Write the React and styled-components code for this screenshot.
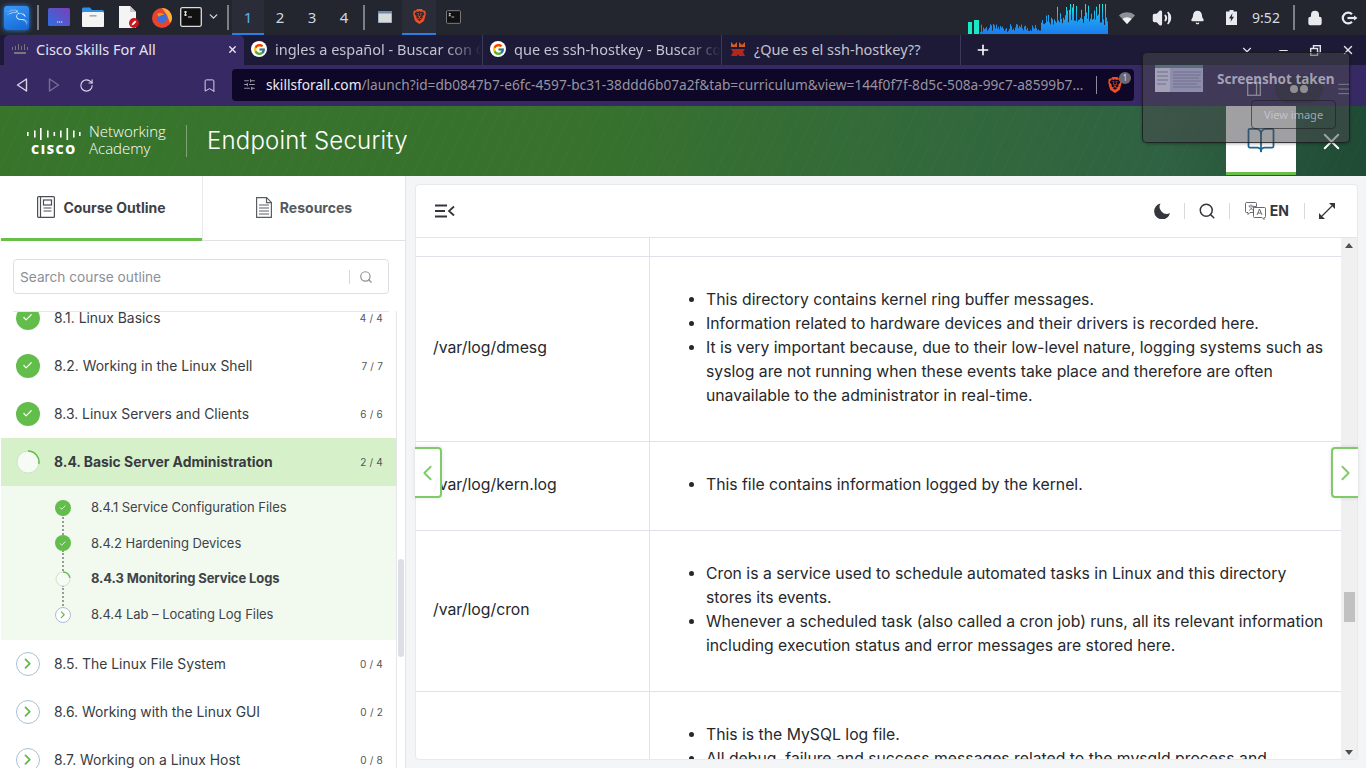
import React from "react";
import styled, { createGlobalStyle } from "styled-components";
import { SiBrave, SiKalilinux } from "react-icons/si";
import { FcGoogle } from "react-icons/fc";
import {
  Bell,
  BookOpen,
  Check,
  ChevronDown,
  ChevronLeft,
  ChevronRight,
  Lock,
  Menu,
  Plus,
  RotateCw,
  Search,
  SlidersHorizontal,
  Volume2,
  X,
  Bookmark,
  Minus,
} from "lucide-react";

const GlobalStyle = createGlobalStyle`
  html, body { margin: 0; padding: 0; height: 100%; overflow: hidden; background: #f4f5f7; }
  * { box-sizing: border-box; }
`;

const Screen = styled.div`
  position: relative;
  width: 1366px;
  height: 768px;
  overflow: hidden;
  display: flex;
  flex-direction: column;
  font-family: Inter, "Liberation Sans", sans-serif;
`;

/* ---------- desktop panel ---------- */
const Panel = styled.div`
  height: 35px;
  flex: none;
  background: #23262f;
  display: flex;
  align-items: center;
  color: #e6e8ec;
  font-family: "Noto Sans", sans-serif;
`;

const PanelSlot = styled.div`
  width: ${(p) => p.$w}px;
  height: 35px;
  flex: none;
  display: flex;
  align-items: center;
  justify-content: center;
  font-size: 15px;
  color: ${(p) => (p.$active ? "#62b0f5" : "#cfd6e2")};
  background: ${(p) => (p.$active ? "#2a2d37" : "transparent")};
  border-bottom: 2px solid ${(p) => (p.$active ? "#2a7fe0" : "transparent")};
`;

const PanelSep = styled.div`
  width: 2px;
  height: 25px;
  margin: 0 ${(p) => p.$gap}px;
  background: #7c7f86;
  flex: none;
`;

const KaliBox = styled.div`
  width: 25px;
  height: 24px;
  margin: 0 8px 0 4px;
  border-radius: 3px;
  background: linear-gradient(160deg, #3a98f6, #1467d6);
  box-shadow: 0 0 5px #2a85e8;
  color: #fff;
  display: flex;
  align-items: center;
  justify-content: center;
  font-size: 23px;
  flex: none;
`;

const NetGraph = styled.svg`
  width: 140px;
  height: 30px;
  margin-left: 498px;
  align-self: flex-end;
  margin-bottom: 1px;
  flex: none;
`;

const Tray = styled.div`
  display: flex;
  align-items: center;
  flex: none;
  color: #e8eaee;
`;

const TrayIcon = styled.div`
  width: ${(p) => p.$w}px;
  flex: none;
  display: flex;
  justify-content: center;
`;

const Clock = styled.span`
  font-size: 14px;
  color: #d8dbe0;
  width: 40px;
  text-align: center;
  flex: none;
`;

/* ---------- browser tabs ---------- */
const TabStrip = styled.div`
  height: 30px;
  flex: none;
  background: #1d1a38;
  display: flex;
  align-items: stretch;
  padding-left: 4px;
  color: #d0cfdc;
  font-family: "Noto Sans", sans-serif;
  font-size: 14.5px;
`;

const Tab = styled.div`
  width: ${(p) => p.$w}px;
  flex: none;
  display: flex;
  align-items: center;
  gap: 8px;
  padding-left: ${(p) => p.$pl}px;
  padding-bottom: 2px;
  background: ${(p) => (p.$active ? "#372963" : "transparent")};
  border-radius: ${(p) => (p.$active ? "5px 5px 0 0" : "0")};
  border-right: ${(p) => (p.$sep ? "1px solid #3c3a58" : "none")};
  margin-right: ${(p) => p.$mr || 0}px;
  color: ${(p) => (p.$active ? "#e4e2ee" : "#c3c2d0")};
`;

const TabText = styled.span`
  flex: 1;
  min-width: 0;
  white-space: nowrap;
  -webkit-mask-image: ${(p) =>
    p.$fade ? "linear-gradient(90deg, #000 82%, transparent 100%)" : "none"};
  mask-image: ${(p) =>
    p.$fade ? "linear-gradient(90deg, #000 82%, transparent 100%)" : "none"};
`;

const Favicon = styled.div`
  width: 16px;
  height: 16px;
  flex: none;
  border-radius: 50%;
  background: #fff;
  display: flex;
  align-items: center;
  justify-content: center;
  font-size: 13px;
`;

const TabClose = styled.div`
  width: 24px;
  display: flex;
  justify-content: center;
  flex: none;
  color: #e6e6ee;
`;

const TabRest = styled.div`
  flex: 1;
  display: flex;
  align-items: center;
  color: #fff;
  padding-left: 14px;
`;

const TabGap = styled.div`
  flex: 1;
`;

const WindowButton = styled.div`
  width: ${(p) => p.$w}px;
  display: flex;
  justify-content: center;
  flex: none;
  color: #e4e4ec;
`;

/* ---------- browser toolbar ---------- */
const Toolbar = styled.div`
  height: 41px;
  flex: none;
  background: #372963;
  display: flex;
  align-items: flex-start;
  padding-top: 4px;
  color: #d7d4e6;
`;

const NavButton = styled.div`
  width: ${(p) => p.$w}px;
  height: 32px;
  flex: none;
  display: flex;
  align-items: center;
  justify-content: ${(p) => (p.$end ? "flex-end" : "center")};
  padding-right: ${(p) => (p.$end ? "15px" : "0")};
  opacity: ${(p) => (p.$off ? 0.4 : 1)};
`;

const AddressBar = styled.div`
  width: 902px;
  height: 32px;
  flex: none;
  background: #0e0728;
  border-radius: 4px;
  display: flex;
  align-items: center;
  padding: 0 0 1px 11px;
  gap: 10px;
  font-family: "Noto Sans", sans-serif;
  font-size: 13.7px;
  color: #97949f;
`;

const Url = styled.div`
  flex: 1;
  min-width: 0;
  white-space: nowrap;
  b {
    font-weight: 400;
    color: #eceaf2;
  }
`;

const ShieldBox = styled.div`
  width: 38px;
  height: 18px;
  flex: none;
  border-left: 1px solid #8d8a99;
  position: relative;
  color: #f04e23;
  font-size: 16px;
  display: flex;
  align-items: center;
  padding-left: 10px;
`;

const ShieldCount = styled.span`
  position: absolute;
  left: 22px;
  top: -4px;
  width: 12px;
  height: 12px;
  border-radius: 50%;
  background: #6b6872;
  color: #ddd;
  font-size: 8px;
  line-height: 12px;
  text-align: center;
`;

const SideToggle = styled.div`
  width: 14px;
  height: 32px;
  margin: 4px 14px 0 113px;
  flex: none;
  display: flex;
  align-items: center;
`;

const WalletPill = styled.div`
  width: 48px;
  height: 28px;
  border-radius: 14px;
  background: #2a2444;
  flex: none;
  display: flex;
  align-items: center;
  justify-content: center;
  color: #ddd;
  margin-top: 6px;
`;

const MenuButton = styled.div`
  width: 42px;
  height: 32px;
  margin-top: 4px;
  flex: none;
  display: flex;
  align-items: center;
  justify-content: center;
`;

/* ---------- course header ---------- */
const CourseHeader = styled.header`
  height: 70px;
  flex: none;
  display: flex;
  align-items: stretch;
  color: #fff;
  background:
    repeating-linear-gradient(115deg, rgba(255, 255, 255, 0.02) 0 1px, transparent 1px 13px),
    linear-gradient(90deg, #38752b 0%, #37712e 45%, #32683c 70%, #2f6242 85%, #1f4a35 100%);
`;

const Brand = styled.div`
  width: 160px;
  margin-left: 27px;
  display: flex;
  gap: 8px;
  align-items: center;
  border-right: 1px solid rgba(255, 255, 255, 0.35);
  height: 32px;
  align-self: center;
  flex: none;
`;

const CiscoMark = styled.div`
  width: 54px;
  display: flex;
  flex-direction: column;
  align-items: center;
  gap: 2px;
`;

const CiscoWord = styled.span`
  font-size: 12.5px;
  line-height: 13px;
  font-weight: 800;
  letter-spacing: 1.6px;
  font-family: "Open Sans", sans-serif;
`;

const AcademyWord = styled.div`
  font-size: 15px;
  line-height: 17px;
  font-weight: 300;
  font-family: "Open Sans", sans-serif;
  padding-bottom: 2px;
`;

const CourseTitle = styled.h1`
  margin: 0 0 2px 20px;
  font-size: 24px;
  font-weight: 300;
  align-self: center;
  flex: 1;
  letter-spacing: 0.2px;
`;

const BookTab = styled.div`
  width: 70px;
  background: #fff;
  border-bottom: 3px solid #6abf4b;
  margin-bottom: 1px;
  color: #1e6490;
  display: flex;
  align-items: center;
  justify-content: center;
  padding-top: 2px;
  flex: none;
`;

const HeaderClose = styled.div`
  width: 70px;
  display: flex;
  align-items: center;
  justify-content: center;
  flex: none;
`;

/* ---------- body ---------- */
const Main = styled.div`
  flex: 1;
  min-height: 0;
  display: flex;
  background: #f4f5f7;
`;

const Sidebar = styled.aside`
  width: 406px;
  flex: none;
  background: #fff;
  border-right: 1px solid #e2e4e8;
  display: flex;
  flex-direction: column;
  padding-left: 1px;
`;

const SideTabs = styled.div`
  display: flex;
  height: 65px;
  flex: none;
`;

const SideTab = styled.div`
  flex: ${(p) => (p.$active ? "0 0 201px" : "1")};
  display: flex;
  align-items: center;
  justify-content: center;
  gap: 8px;
  font-size: 14px;
  font-weight: 700;
  color: ${(p) => (p.$active ? "#3d4147" : "#555a60")};
  border-bottom: ${(p) => (p.$active ? "3px solid #6abf4b" : "1px solid #dfe1e5")};
  border-left: ${(p) => (p.$active ? "none" : "1px solid #e8e9ec")};
  padding-bottom: ${(p) => (p.$active ? 0 : 2)}px;
`;

const SearchWrap = styled.div`
  padding: 18px 16px 17px 12px;
  flex: none;
`;

const SearchBox = styled.div`
  height: 35px;
  border: 1px solid #dcdfe3;
  border-radius: 4px;
  display: flex;
  align-items: center;
  padding: 0 15px 0 6px;
  font-size: 13.7px;
  color: #8b9097;
`;

const SearchHint = styled.span`
  flex: 1;
`;

const SearchIcon = styled.div`
  border-left: 1px solid #d5d7db;
  padding-left: 9px;
  height: 14px;
  display: flex;
  align-items: center;
  color: #8b9097;
`;

const ListArea = styled.div`
  flex: 1;
  min-height: 0;
  display: flex;
  overflow: hidden;
`;

const OutlineList = styled.div`
  width: 396px;
  flex: none;
  overflow: hidden;
  border-right: 1px solid #e6e7ea;
  position: relative;
  &::before {
    content: "";
    position: absolute;
    left: 12px;
    right: 7px;
    top: 0;
    height: 1px;
    background: #e6e7ea;
    z-index: 2;
  }
`;

const OutlineScroll = styled.div`
  margin-top: -17px;
`;

const Module = styled.div`
  height: 48px;
  display: flex;
  align-items: center;
  padding: 0 13px 0 15px;
  background: ${(p) => (p.$current ? "#d6f1c9" : "transparent")};
  font-size: 13.9px;
  color: #373c42;
  font-weight: ${(p) => (p.$current ? 700 : 400)};
`;

const ModuleName = styled.span`
  flex: 1;
  margin-left: 14px;
`;

const Count = styled.span`
  font-size: 10px;
  letter-spacing: 0.2px;
  color: #555;
  font-weight: 400;
`;

const DoneDot = styled.div`
  width: ${(p) => p.$size}px;
  height: ${(p) => p.$size}px;
  border-radius: 50%;
  background: #63bd4a;
  color: #fff;
  display: flex;
  align-items: center;
  justify-content: center;
  flex: none;
  position: relative;
  z-index: 1;
`;

const NextDot = styled.div`
  width: ${(p) => p.$size}px;
  height: ${(p) => p.$size}px;
  border-radius: 50%;
  border: 1px solid #a9bfd2;
  background: #fff;
  color: #5dbb45;
  display: flex;
  align-items: center;
  justify-content: center;
  flex: none;
  position: relative;
  z-index: 1;
`;

const ProgressDot = styled.svg`
  width: ${(p) => p.$size}px;
  height: ${(p) => p.$size}px;
  flex: none;
  position: relative;
  z-index: 1;
`;

const SubList = styled.div`
  height: 154px;
  background: #f2faf0;
  padding-top: 4px;
`;

const SubItem = styled.div`
  height: 35.6px;
  display: flex;
  align-items: center;
  padding-left: 54px;
  font-size: 13px;
  letter-spacing: ${(p) => (p.$current ? "-0.1px" : "-0.04px")};
  color: #3f4449;
  font-weight: ${(p) => (p.$current ? 700 : 400)};
  position: relative;
  &::after {
    content: "";
    display: ${(p) => (p.$last ? "none" : "block")};
    position: absolute;
    left: 61px;
    top: 24px;
    height: 24px;
    border-left: 2px dotted #9a9a9a;
  }
`;

const SubName = styled.span`
  margin-left: 20px;
  padding-bottom: 1px;
`;

const SideScroll = styled.div`
  flex: 1;
  position: relative;
`;

const SideThumb = styled.div`
  position: absolute;
  left: 1px;
  right: 1px;
  top: 248px;
  height: 98px;
  border-radius: 3px;
  background: #dcdfe5;
`;

/* ---------- content card ---------- */
const ContentCard = styled.section`
  width: 943px;
  height: 576px;
  margin: 8px 0 0 9px;
  background: #fff;
  border: 1px solid #e8e9ec;
  border-radius: 4px;
  flex: none;
  display: flex;
  flex-direction: column;
  overflow: hidden;
`;

const ContentBar = styled.div`
  height: 53px;
  flex: none;
  display: flex;
  align-items: center;
  padding: 0 22px 1px 19px;
  border-bottom: 1px solid #e4e5e9;
  color: #33373c;
`;

const BarSpacer = styled.div`
  flex: 1;
`;

const BarDivider = styled.div`
  width: 1px;
  height: 16px;
  background: #d8dade;
  margin: 0 ${(p) => p.$r}px 0 ${(p) => p.$l}px;
`;

const LangLabel = styled.span`
  font-size: 14px;
  font-weight: 700;
  margin-left: 4px;
`;

const ContentBody = styled.div`
  flex: 1;
  min-height: 0;
  display: flex;
`;

const TableArea = styled.div`
  flex: 1;
  min-width: 0;
  overflow: hidden;
`;

const Row = styled.div`
  display: grid;
  grid-template-columns: 234px 1fr;
  border-bottom: 1px solid #dfe2ea;
`;

const PathCell = styled.div`
  border-right: 1px solid #dfe2ea;
  display: flex;
  align-items: center;
  padding: 0 0 4px 17px;
  font-size: 15.8px;
  color: #25282c;
  min-height: ${(p) => p.$h || 0}px;
`;

const TextCell = styled.ul`
  margin: 0;
  padding: ${(p) => (p.$empty ? "0" : "31px 14px 33px 56px")};
  font-size: 15.75px;
  line-height: 24px;
  color: #25282c;
`;

const ScrollTrack = styled.div`
  width: 16px;
  flex: none;
  background: #f0f0f0;
  position: relative;
`;

const ScrollArrow = styled.div`
  position: absolute;
  left: 4px;
  ${(p) => (p.$down ? "bottom: 4px;" : "top: 5px;")}
  width: 0;
  height: 0;
  border-left: 4px solid transparent;
  border-right: 4px solid transparent;
  ${(p) => (p.$down ? "border-top: 5px solid #505050;" : "border-bottom: 5px solid #505050;")}
`;

const ScrollThumb = styled.div`
  position: absolute;
  left: 3px;
  right: 2px;
  top: 354px;
  height: 30px;
  background: #c1c1c1;
`;

/* ---------- overlays ---------- */
const PageArrow = styled.div`
  position: absolute;
  top: 447px;
  ${(p) => (p.$right ? "left: 1331px;" : "left: 415px;")}
  width: 27px;
  height: 51px;
  background: rgba(255, 255, 255, 0.95);
  border: 2px solid #7fcb68;
  ${(p) => (p.$right ? "border-right: none;" : "border-left: none;")}
  border-radius: ${(p) => (p.$right ? "4px 0 0 4px" : "0 4px 4px 0")};
  color: #7fcb68;
  display: flex;
  align-items: center;
  justify-content: center;
  box-shadow: 0 0 4px rgba(0, 0, 0, 0.12);
`;

const Toast = styled.div`
  position: absolute;
  left: 1142px;
  top: 52px;
  width: 208px;
  height: 91px;
  border-radius: 5px;
  border: 1px solid rgba(20, 20, 24, 0.75);
  background: rgba(72, 72, 78, 0.52);
  color: rgba(210, 208, 222, 0.7);
  font-family: "Noto Sans", sans-serif;
  box-shadow: 0 1px 3px rgba(0, 0, 0, 0.3);
  z-index: 5;
`;

const ToastThumb = styled.svg`
  position: absolute;
  left: 12px;
  top: 12px;
  width: 48px;
  height: 27px;
`;

const ToastTitle = styled.div`
  position: absolute;
  left: 74px;
  top: 17px;
  font-size: 13.5px;
  font-weight: 700;
  white-space: nowrap;
`;

const ToastButton = styled.div`
  position: absolute;
  left: 108px;
  top: 47px;
  width: 85px;
  height: 29px;
  border: 1px solid rgba(30, 30, 34, 0.6);
  border-radius: 4px;
  font-size: 11px;
  display: flex;
  align-items: center;
  justify-content: center;
`;

/* ---------- drawings ---------- */
const rand = (i) => {
  const x = Math.sin(i * 12.9898) * 43758.5453;
  return x - Math.floor(x);
};

const Graph = () => {
  const bars = [];
  for (let i = 0; i < 128; i++) {
    const tall = i > 60;
    const h = tall ? 9 + rand(i) * rand(i + 3) * 30 + rand(i + 9) * 6 : 2 + rand(i) * 8;
    bars.push(<rect key={i} x={12 + i} y={30 - h} width="1" height={h} fill="url(#net)" />);
  }
  return (
    <NetGraph viewBox="0 0 140 30">
      <defs>
        <linearGradient id="net" x1="0" y1="30" x2="0" y2="0" gradientUnits="userSpaceOnUse">
          <stop offset="0" stopColor="#1c7cf0" />
          <stop offset="0.55" stopColor="#1fa4ee" />
          <stop offset="1" stopColor="#12f0e0" />
        </linearGradient>
      </defs>
      <rect x="0" y="18" width="4" height="12" fill="#18e8c8" />
      <rect x="6" y="16" width="5" height="14" fill="#18e8c8" />
      {bars}
    </NetGraph>
  );
};

const TerminalIcon = ({ bright }) => (
  <svg width={bright ? 22 : 15} height={bright ? 20 : 14} viewBox="0 0 22 20">
    <rect x="0.7" y="0.7" width="20.6" height="18.6" rx="1.5" fill="#111" stroke={bright ? "#ddd" : "#888"} strokeWidth="1.3" />
    <path d="M4 5h3M4 8h3M5.5 4v5M8 10h4" stroke="#ddd" strokeWidth="1.2" fill="none" />
  </svg>
);

const Firefox = () => (
  <svg width="22" height="22" viewBox="0 0 22 22">
    <circle cx="11" cy="12" r="10" fill="#e8432e" />
    <path d="M11 2c5 0 10 4 10 10 0 2-1 4-2 5l-3-8-5-7z" fill="#fbb03b" />
    <circle cx="11" cy="12" r="5" fill="#3d6fd8" />
    <path d="M6 8c3-2 6-1 7 1-2 0-4 0-5 2z" fill="#f7941d" />
  </svg>
);

const PanelApps = () => (
  <>
    <PanelSlot $w={22}>
      <svg width="22" height="18" viewBox="0 0 22 18">
        <defs>
          <linearGradient id="win" x1="0" y1="1" x2="1" y2="0">
            <stop offset="0" stopColor="#2f6fe0" />
            <stop offset="1" stopColor="#7a3fb8" />
          </linearGradient>
        </defs>
        <rect width="22" height="18" rx="1.5" fill="url(#win)" />
        <path d="M9 14h1.2M11 14h1.2M13 14h1.2" stroke="#fff" strokeWidth="1.1" />
      </svg>
    </PanelSlot>
    <PanelSlot $w={12} />
    <PanelSlot $w={22}>
      <svg width="22" height="20" viewBox="0 0 22 20">
        <path d="M0 2a1.5 1.5 0 0 1 1.5-1.5H8L10 3h10.5A1.5 1.5 0 0 1 22 4.5V5H0z" fill="#2f8fe6" />
        <rect y="5" width="22" height="15" rx="1" fill="#f4f4f4" />
        <rect x="7.5" y="8" width="7" height="1.6" fill="#aaa" />
      </svg>
    </PanelSlot>
    <PanelSlot $w={14} />
    <PanelSlot $w={22}>
      <svg width="22" height="22" viewBox="0 0 22 22">
        <path d="M1 0h11l6 6v16H1z" fill="#f4f4f4" />
        <path d="M12 0l6 6h-6z" fill="#c8c8c8" />
        <circle cx="16" cy="17" r="5" fill="#c8161d" />
        <path d="M13.5 19.5l1-2.5 2.5-2.5 1.4 1.3-2.5 2.6z" fill="#fff" />
      </svg>
    </PanelSlot>
    <PanelSlot $w={11} />
    <PanelSlot $w={22}>
      <Firefox />
    </PanelSlot>
    <PanelSlot $w={7} />
    <PanelSlot $w={22}>
      <TerminalIcon bright />
    </PanelSlot>
    <PanelSlot $w={22}>
      <ChevronDown size={13} strokeWidth={2.5} />
    </PanelSlot>
  </>
);

const Moz = () => (
  <svg width="16" height="16" viewBox="0 0 16 16">
    <rect width="16" height="16" fill="#1d1a38" />
    <path d="M1 1l3 3 3-3v5H1zM9 1l3 3 3-3v5H9z" fill="#d85a1c" />
    <path d="M1 8h14l-2 3 2 4H9l-1-2-1 2H1l2-4z" fill="#b3271a" />
  </svg>
);

const ProgressRing = ({ size, arc }) => {
  const r = size / 2 - 1;
  const c = size / 2;
  const a = (arc * Math.PI) / 180;
  return (
    <ProgressDot $size={size} viewBox={`0 0 ${size} ${size}`}>
      <circle cx={c} cy={c} r={r} fill="#f7fbf5" stroke="#cfe3c8" strokeWidth="1" />
      <path
        d={`M${c} ${c - r}A${r} ${r} 0 0 1 ${c + r * Math.sin(a)} ${c - r * Math.cos(a)}`}
        fill="none"
        stroke="#63bd4a"
        strokeWidth="1.5"
      />
    </ProgressDot>
  );
};

const CiscoBars = () => (
  <svg width="54" height="14" viewBox="0 0 54 14" fill="#fff">
    {[[0, 4], [7, 7], [13, 12], [20, 7], [26.5, 4], [33, 7], [39.5, 12], [46, 7], [52, 4]].map(([x, h]) => (
      <rect key={x} x={x} y={(14 - h) / 2} width="1.6" height={h} />
    ))}
  </svg>
);

const OutlineIcon = () => (
  <svg width="18" height="22" viewBox="0 0 18 22" fill="none" stroke="#4a4e54" strokeWidth="1.2">
    <rect x="0.6" y="0.6" width="16.8" height="20.8" rx="1" />
    <path d="M3.5 1v20" />
    <rect x="6.5" y="4" width="8" height="5" />
    <path d="M6.5 12h8M6.5 15h8" />
  </svg>
);

const ResourceIcon = () => (
  <svg width="16" height="21" viewBox="0 0 16 21" fill="none" stroke="#5a5e64" strokeWidth="1.2">
    <path d="M0.6 0.6h10l4.8 4.8v15H0.6z" />
    <path d="M10.5 0.6v5h5M3 8h10M3 11h10M3 14h10M3 17h10" />
  </svg>
);

const CollapseIcon = () => (
  <svg width="20" height="14" viewBox="0 0 20 14" fill="none" stroke="#33373c" strokeWidth="1.8">
    <path d="M0 1.5h12M0 7h10M0 12.5h12M19 2.5L14 7l5 4.5" />
  </svg>
);

const MoonIcon = () => (
  <svg width="16" height="16" viewBox="0 0 16 16" fill="#33373c">
    <path d="M6.5 0.5A8 8 0 1 0 16 10 7 7 0 0 1 6.5 0.5z" />
  </svg>
);

const ExpandIcon = () => (
  <svg width="16" height="16" viewBox="0 0 16 16" fill="#33373c">
    <path d="M3 13L13 3" stroke="#33373c" strokeWidth="1.3" />
    <path d="M10 0h6v6zM0 10l6 6H0z" />
  </svg>
);

const WifiIcon = () => (
  <svg width="16" height="13" viewBox="0 0 16 13">
    <path d="M0 4.5a11.5 11.5 0 0 1 16 0L8 13z" fill="#8d9097" />
    <path d="M3.4 8a6.6 6.6 0 0 1 9.2 0L8 13z" fill="#f0f1f3" />
  </svg>
);

const SessionIcon = () => (
  <svg width="17" height="14" viewBox="0 0 17 14" fill="none" stroke="#e8eaee" strokeWidth="2.2">
    <path d="M11 3.2A5.4 5.4 0 1 0 11 10.8" />
    <path d="M6.5 7h8" />
    <path d="M13 4.4L16.5 7 13 9.6z" fill="#e8eaee" stroke="none" />
  </svg>
);

const TranslateIcon = () => (
  <svg width="21" height="18" viewBox="0 0 21 18" fill="none" stroke="#55595f" strokeWidth="0.9">
    <path d="M1.5 0.5h9a1 1 0 0 1 1 1v3h-3v6H5l-2 2v-2H1.5a1 1 0 0 1-1-1v-8a1 1 0 0 1 1-1z" />
    <path d="M9.5 5.5h10a1 1 0 0 1 1 1v8a1 1 0 0 1-1 1H19v2l-2-2H9.5a1 1 0 0 1-1-1v-8a1 1 0 0 1 1-1z" fill="#fff" />
    <path d="M12 13l2.5-6 2.5 6M13 11h3" />
    <path d="M3.5 4h5M6 2.5V4M4.5 4c.5 2 2 3.5 3.5 4M7.5 4C7 6 6 7.5 4 8.5" strokeWidth="0.7" />
  </svg>
);

const Done = ({ size }) => (
  <DoneDot $size={size}>
    <Check size={size * 0.46} strokeWidth={2.6} />
  </DoneDot>
);

const Next = ({ size }) => (
  <NextDot $size={size}>
    <ChevronRight size={size * 0.72} strokeWidth={2.4} />
  </NextDot>
);

const CourseModule = ({ status, name, count }) => (
  <Module $current={status === "current"}>
    {status === "done" && <Done size={24} />}
    {status === "next" && <Next size={24} />}
    {status === "current" && <ProgressRing size={24} arc={100} />}
    <ModuleName>{name}</ModuleName>
    <Count>{count}</Count>
  </Module>
);

const rows = [
  {
    path: "/var/log/dmesg",
    items: [
      "This directory contains kernel ring buffer messages.",
      "Information related to hardware devices and their drivers is recorded here.",
      "It is very important because, due to their low-level nature, logging systems such as syslog are not running when these events take place and therefore are often unavailable to the administrator in real-time.",
    ],
  },
  {
    path: "/var/log/kern.log",
    items: ["This file contains information logged by the kernel."],
  },
  {
    path: "/var/log/cron",
    items: [
      "Cron is a service used to schedule automated tasks in Linux and this directory stores its events.",
      "Whenever a scheduled task (also called a cron job) runs, all its relevant information including execution status and error messages are stored here.",
    ],
  },
  {
    path: "",
    items: [
      "This is the MySQL log file.",
      "All debug, failure and success messages related to the mysqld process and",
    ],
  },
];

export default function App() {
  return (
    <Screen>
      <GlobalStyle />

      <Panel>
        <KaliBox>
          <SiKalilinux />
        </KaliBox>
        <PanelSep $gap={0} />
        <PanelSlot $w={9} />
        <PanelApps />
        <PanelSep $gap={3} />
        <PanelSlot $w={32} $active>1</PanelSlot>
        <PanelSlot $w={32}>2</PanelSlot>
        <PanelSlot $w={32}>3</PanelSlot>
        <PanelSlot $w={32}>4</PanelSlot>
        <PanelSep $gap={3} />
        <PanelSlot $w={34}>
          <svg width="14" height="12" viewBox="0 0 14 12">
            <rect width="14" height="12" fill="#d8dcd8" stroke="#6f87a8" />
            <rect width="14" height="2.5" fill="#6f87a8" />
          </svg>
        </PanelSlot>
        <PanelSlot $w={34} $active>
          <SiBrave size={15} color="#f04e23" />
        </PanelSlot>
        <PanelSlot $w={34}>
          <TerminalIcon />
        </PanelSlot>
        <Graph />
        <Tray>
          <TrayIcon $w={38}>
            <WifiIcon />
          </TrayIcon>
          <TrayIcon $w={32}>
            <Volume2 size={20} fill="#e8eaee" strokeWidth={2.2} />
          </TrayIcon>
          <TrayIcon $w={38}>
            <Bell size={15} fill="#e8eaee" />
          </TrayIcon>
          <TrayIcon $w={30}>
            <svg width="11" height="15" viewBox="0 0 11 15">
              <path d="M3.5 0h4v1.5H11V15H0V1.5h3.5z" fill="#e8eaee" />
              <path d="M6.5 3L3 8.5h2.2L4.5 12 8 6.8H5.8z" fill="#23262f" />
            </svg>
          </TrayIcon>
          <Clock>9:52</Clock>
          <PanelSep $gap={7} />
          <TrayIcon $w={26}>
            <Lock size={16} fill="#e8eaee" />
          </TrayIcon>
          <TrayIcon $w={42}>
            <SessionIcon />
          </TrayIcon>
        </Tray>
      </Panel>

      <TabStrip>
        <Tab $active $w={240} $mr={6} $pl={8}>
          <svg width="16" height="10" viewBox="0 0 16 10" fill="#777">
            <path d="M0 3h1v3H0zM3 2h1v4H3zM6 0h1v6H6zM9 2h1v4H9zM12 0h1v6h-1zM15 3h1v3h-1zM2 8h12v2H2z" />
          </svg>
          <TabText>Cisco Skills For All</TabText>
          <TabClose>
            <X size={11} strokeWidth={3} />
          </TabClose>
        </Tab>
        <Tab $w={233} $sep $pl={1}>
          <Favicon>
            <FcGoogle />
          </Favicon>
          <TabText $fade>ingles a español - Buscar con G</TabText>
        </Tab>
        <Tab $w={239} $sep $pl={7}>
          <Favicon>
            <FcGoogle />
          </Favicon>
          <TabText $fade>que es ssh-hostkey - Buscar co</TabText>
        </Tab>
        <Tab $w={239} $sep $pl={8}>
          <Moz />
          <TabText>¿Que es el ssh-hostkey??</TabText>
        </Tab>
        <TabRest>
          <Plus size={16} strokeWidth={2.4} />
          <TabGap />
          <WindowButton $w={38}>
            <ChevronDown size={14} />
          </WindowButton>
          <WindowButton $w={34}>
            <Minus size={13} />
          </WindowButton>
          <WindowButton $w={30}>
            <svg width="11" height="11" viewBox="0 0 11 11" fill="none" stroke="#e4e4ec" strokeWidth="1.4">
              <rect x="3.5" y="0.7" width="6.8" height="6.8" />
              <rect x="0.7" y="3.5" width="6.8" height="6.8" fill="#1d1a38" />
            </svg>
          </WindowButton>
          <WindowButton $w={36}>
            <X size={14} strokeWidth={2.5} />
          </WindowButton>
        </TabRest>
      </TabStrip>

      <Toolbar>
        <NavButton $w={43}>
          <svg width="12" height="14" viewBox="0 0 12 14" fill="none" stroke="#d7d4e6" strokeWidth="1.4">
            <path d="M10.5 1L1.5 7l9 6z" strokeLinejoin="round" />
          </svg>
        </NavButton>
        <NavButton $w={21} $off>
          <svg width="12" height="14" viewBox="0 0 12 14" fill="none" stroke="#d7d4e6" strokeWidth="1.4">
            <path d="M1.5 1l9 6-9 6z" strokeLinejoin="round" />
          </svg>
        </NavButton>
        <NavButton $w={44}>
          <RotateCw size={15} strokeWidth={1.8} />
        </NavButton>
        <NavButton $w={124} $end>
          <Bookmark size={15} strokeWidth={1.6} />
        </NavButton>
        <AddressBar>
          <SlidersHorizontal size={13} color="#9b98a6" />
          <Url>
            <b>skillsforall.com</b>/launch?id=db0847b7-e6fc-4597-bc31-38ddd6b07a2f&amp;tab=curriculum&amp;view=144f0f7f-8d5c-508a-99c7-a8599b7…
          </Url>
          <ShieldBox>
            <SiBrave />
            <ShieldCount>1</ShieldCount>
          </ShieldBox>
        </AddressBar>
        <SideToggle>
          <svg width="14" height="14" viewBox="0 0 14 14" fill="none" stroke="#cfcbe0" strokeWidth="1.3">
            <rect x="0.7" y="0.7" width="12.6" height="12.6" />
            <path d="M9.5 1v12" />
          </svg>
        </SideToggle>
        <WalletPill>
          <svg width="20" height="8" viewBox="0 0 20 8" fill="#ddd">
            <circle cx="5" cy="4" r="4" />
            <circle cx="15" cy="4" r="4" />
          </svg>
        </WalletPill>
        <MenuButton>
          <Menu size={16} strokeWidth={1.2} />
        </MenuButton>
      </Toolbar>

      <CourseHeader>
        <Brand>
          <CiscoMark>
            <CiscoBars />
            <CiscoWord>CISCO</CiscoWord>
          </CiscoMark>
          <AcademyWord>
            Networking
            <br />
            Academy
          </AcademyWord>
        </Brand>
        <CourseTitle>Endpoint Security</CourseTitle>
        <BookTab>
          <BookOpen size={30} strokeWidth={1.4} />
        </BookTab>
        <HeaderClose>
          <X size={27} strokeWidth={1.8} />
        </HeaderClose>
      </CourseHeader>

      <Main>
        <Sidebar>
          <SideTabs>
            <SideTab $active>
              <OutlineIcon />
              Course Outline
            </SideTab>
            <SideTab>
              <ResourceIcon />
              Resources
            </SideTab>
          </SideTabs>
          <SearchWrap>
            <SearchBox>
              <SearchHint>Search course outline</SearchHint>
              <SearchIcon>
                <Search size={14} />
              </SearchIcon>
            </SearchBox>
          </SearchWrap>
          <ListArea>
            <OutlineList>
              <OutlineScroll>
                <CourseModule status="done" name="8.1. Linux Basics" count="4 / 4" />
                <CourseModule status="done" name="8.2. Working in the Linux Shell" count="7 / 7" />
                <CourseModule status="done" name="8.3. Linux Servers and Clients" count="6 / 6" />
                <CourseModule status="current" name="8.4. Basic Server Administration" count="2 / 4" />
                <SubList>
                  <SubItem>
                    <Done size={16} />
                    <SubName>8.4.1 Service Configuration Files</SubName>
                  </SubItem>
                  <SubItem>
                    <Done size={16} />
                    <SubName>8.4.2 Hardening Devices</SubName>
                  </SubItem>
                  <SubItem $current>
                    <ProgressRing size={16} arc={80} />
                    <SubName>8.4.3 Monitoring Service Logs</SubName>
                  </SubItem>
                  <SubItem $last>
                    <Next size={16} />
                    <SubName>8.4.4 Lab – Locating Log Files</SubName>
                  </SubItem>
                </SubList>
                <CourseModule status="next" name="8.5. The Linux File System" count="0 / 4" />
                <CourseModule status="next" name="8.6. Working with the Linux GUI" count="0 / 2" />
                <CourseModule status="next" name="8.7. Working on a Linux Host" count="0 / 8" />
              </OutlineScroll>
            </OutlineList>
            <SideScroll>
              <SideThumb />
            </SideScroll>
          </ListArea>
        </Sidebar>

        <ContentCard>
          <ContentBar>
            <CollapseIcon />
            <BarSpacer />
            <MoonIcon />
            <BarDivider $l={14} $r={13} />
            <Search size={18} strokeWidth={2} />
            <BarDivider $l={13} $r={15} />
            <TranslateIcon />
            <LangLabel>EN</LangLabel>
            <BarDivider $l={15} $r={14} />
            <ExpandIcon />
          </ContentBar>
          <ContentBody>
            <TableArea>
              <Row>
                <PathCell $h={18} />
                <TextCell $empty />
              </Row>
              {rows.map((row) => (
                <Row key={row.path || "mysql"}>
                  <PathCell>{row.path}</PathCell>
                  <TextCell>
                    {row.items.map((item) => (
                      <li key={item}>{item}</li>
                    ))}
                  </TextCell>
                </Row>
              ))}
            </TableArea>
            <ScrollTrack>
              <ScrollArrow />
              <ScrollThumb />
              <ScrollArrow $down />
            </ScrollTrack>
          </ContentBody>
        </ContentCard>
      </Main>

      <PageArrow>
        <ChevronLeft size={30} strokeWidth={1.8} />
      </PageArrow>
      <PageArrow $right>
        <ChevronRight size={30} strokeWidth={1.8} />
      </PageArrow>

      <Toast>
        <ToastThumb viewBox="0 0 48 27">
          <rect width="48" height="27" fill="#8f8dad" />
          <rect width="48" height="3" fill="#56707a" />
          <rect y="3" width="15" height="24" fill="#a3a2b8" />
          <path d="M2 7h11M2 11h11M2 15h11M2 19h9M18 7h28M18 10h28M18 13h26M18 16h28M18 19h24M18 22h28" stroke="#6f6e8c" strokeWidth="1" />
        </ToastThumb>
        <ToastTitle>Screenshot taken</ToastTitle>
        <ToastButton>View image</ToastButton>
      </Toast>
    </Screen>
  );
}
